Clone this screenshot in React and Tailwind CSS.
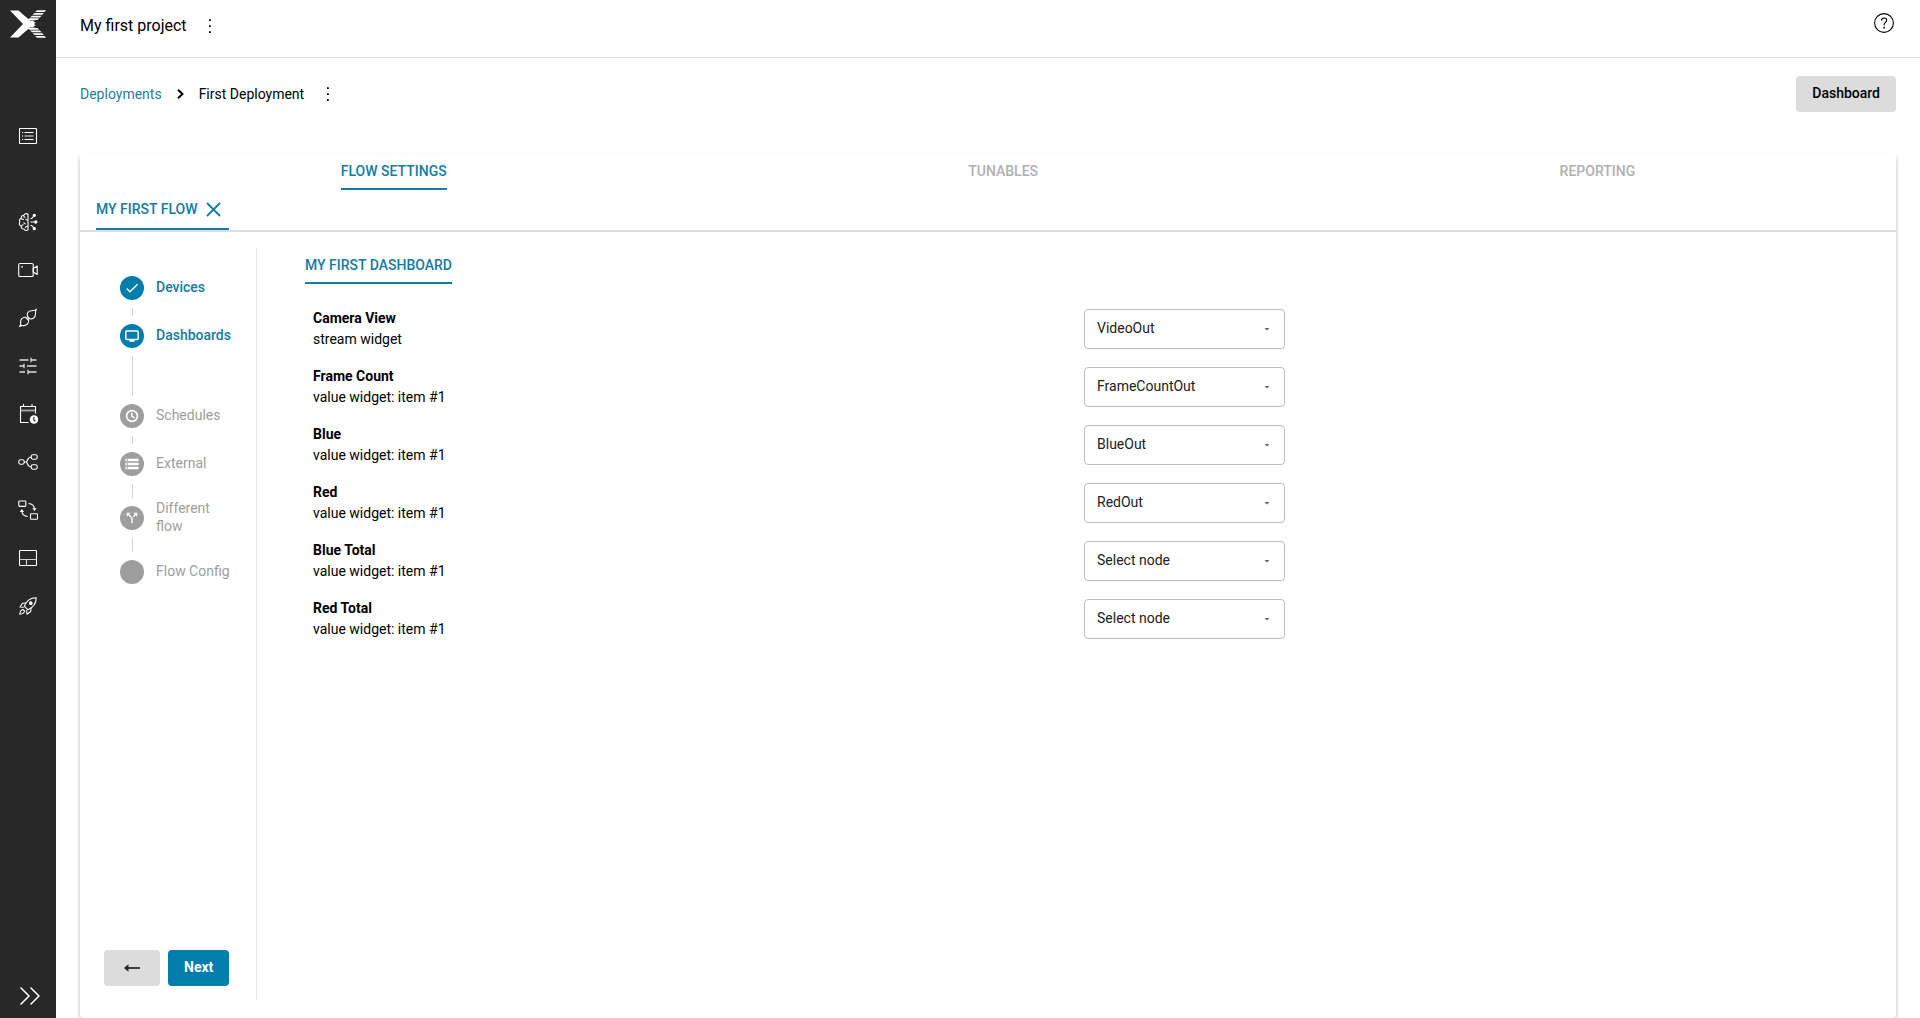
import { Fragment } from 'react'
import { MdCheck, MdCallSplit, MdStorage } from 'react-icons/md'

const NAV_ITEMS = [
  { id: 'devices', label: 'Overview', icon: OverviewIcon },
  { id: 'models', label: 'Models', icon: BrainIcon },
  { id: 'cameras', label: 'Cameras', icon: CameraIcon },
  { id: 'connections', label: 'Connections', icon: PlugIcon },
  { id: 'tuning', label: 'Tuning', icon: SlidersIcon },
  { id: 'schedules', label: 'Schedules', icon: CalendarIcon },
  { id: 'flows', label: 'Flows', icon: BranchIcon },
  { id: 'transforms', label: 'Transforms', icon: SwapIcon },
  { id: 'dashboards', label: 'Dashboards', icon: LayoutIcon },
  { id: 'deployments', label: 'Deployments', icon: RocketIcon },
]

const TABS = ['FLOW SETTINGS', 'TUNABLES', 'REPORTING']

const STEPS = [
  { label: 'Devices', icon: MdCheck, active: true, line: 'h-2' },
  { label: 'Dashboards', icon: ScreenIcon, active: true, line: 'h-10' },
  { label: 'Schedules', icon: ClockIcon, line: 'h-2' },
  { label: 'External', icon: MdStorage, line: 'h-3.5' },
  { label: 'Different flow', icon: MdCallSplit, line: 'h-3.5' },
  { label: 'Flow Config' },
]

const WIDGETS = [
  { name: 'Camera View', type: 'stream widget', node: 'VideoOut' },
  { name: 'Frame Count', type: 'value widget: item #1', node: 'FrameCountOut' },
  { name: 'Blue', type: 'value widget: item #1', node: 'BlueOut' },
  { name: 'Red', type: 'value widget: item #1', node: 'RedOut' },
  { name: 'Blue Total', type: 'value widget: item #1', node: 'Select node' },
  { name: 'Red Total', type: 'value widget: item #1', node: 'Select node' },
]

const NODES = ['Select node', 'VideoOut', 'FrameCountOut', 'BlueOut', 'RedOut']

function LineIcon({ children }) {
  return (
    <svg viewBox="0 0 20 20" className="size-5" fill="none" stroke="currentColor" strokeWidth="1.1" strokeLinejoin="round" aria-hidden="true">
      {children}
    </svg>
  )
}

function OverviewIcon() {
  return (
    <LineIcon>
      <rect x="1.5" y="2.5" width="17" height="15" rx="0.5" />
      <path d="M4 6.5h1.2M6.5 6.5h9M4 13.5h1.2M6.5 13.5h9" />
      <path d="M4 10h1.2M6.5 10h9" strokeWidth="1.6" opacity="0.6" />
    </LineIcon>
  )
}

function BrainIcon() {
  return (
    <LineIcon>
      <path d="M10 1.8v16.4M10 2.2C8.300 1 6.200 1.700 5.800 3.300 4 3.200 3 4.600 3.400 6 1.600 6.700 1 8.500 1.900 10 .8 11.500 1.500 13.700 3.200 14.200 3 16 4.400 17.200 6 17c.7 1.500 2.600 2 4 .9" />
      <path d="M5.800 3.300c-.2 1.200.4 2 1.500 2.200M3.400 6.200c.5 1.200 1.400 1.500 2.400 1.200M5.300 11c1-.2 1.800.2 2.200 1.200M3.300 14.200c.4-1 1.200-1.500 2.300-1.400M10 8.300c-1.300.1-2-.4-2.300-1.400M10 14.300c-1.300-.2-2.300.3-2.800 1.400" />
      <path d="M12.500 10h4M12.500 6.500h1.200l2.300-2.600M12.500 13.500h1.200l2.300 2.600" />
      <circle cx="17.800" cy="10" r="1.100" fill="currentColor" />
      <circle cx="16.300" cy="3.300" r="1.100" fill="currentColor" />
      <circle cx="16.300" cy="16.700" r="1.100" fill="currentColor" />
    </LineIcon>
  )
}

function CameraIcon() {
  return (
    <LineIcon>
      <rect x=".7" y="3.500" width="14.500" height="13" rx="1.300" />
      <path d="M15.200 8.500 19.200 6v8.500l-4-2.500z" />
      <circle cx="4" cy="6.800" r=".9" fill="currentColor" stroke="none" />
    </LineIcon>
  )
}

function PlugIcon() {
  return (
    <LineIcon>
      <path d="M9.500 8.300C8.400 5.300 10.500 2.600 13.700 2.700L17 2.300 18.300 1.200 17.600 3.300 17.400 6.500C17.300 9.600 14.700 11.400 11.900 10.900z" />
      <path d="M7.600 9.300C4.500 8.900 2.300 11.500 2.600 14.200L2.700 16.500 1.500 18.600 3.600 17.600 6 17.600C9 17.500 10.900 15 10.600 12.400z" />
      <path d="M8.500 10.200l1-1M9.800 11.500l1-1" />
    </LineIcon>
  )
}

function SlidersIcon() {
  return (
    <LineIcon>
      <g strokeWidth="1.300" opacity=".85">
        <path d="M1.500 4h9M13 4h5.500M13 1.800v4.400" />
        <path d="M1.500 10h4.500M6 7.800v4.400M9 10h9.500" />
        <path d="M1.500 16h5.500M10 16h8.500M10 13.800v4.400" />
      </g>
    </LineIcon>
  )
}

function CalendarIcon() {
  return (
    <LineIcon>
      <path d="M10.500 18.500H2.500v-16h15v7M5.500 0v2.500M14 0v2.500" />
      <path d="M2.500 6.500h15" strokeWidth="1.800" opacity=".6" />
      <circle cx="16" cy="15.500" r="4.300" fill="currentColor" stroke="none" />
      <path d="M15.800 13v3l1.600 1.200" stroke="#282828" />
    </LineIcon>
  )
}

function BranchIcon() {
  return (
    <LineIcon>
      <rect x=".8" y="7.800" width="5.400" height="4.400" rx="1.600" />
      <rect x="13.200" y="2.800" width="6" height="4.400" rx="1.600" />
      <rect x="13.200" y="12.800" width="6" height="4.400" rx="1.600" />
      <path d="M6.200 10h2.300M13.200 5C10 5 9.800 7.500 8.500 10c1.300 2.500 1.500 5 4.700 5" />
    </LineIcon>
  )
}

function SwapIcon() {
  return (
    <LineIcon>
      <rect x=".8" y="1" width="7" height="5.400" rx=".8" />
      <rect x="12.500" y="13.800" width="7" height="5.400" rx=".8" />
      <path d="M10.500 3.500c3.500.2 5.700 2 5.900 5.500M9.800 16.500c-3.500-.2-5.700-2-5.900-5.500" />
      <path d="m14.300 8.200 2.200 2.900 2.200-2.900zM1.700 12l2.200-2.900L6.100 12z" fill="currentColor" stroke="none" />
    </LineIcon>
  )
}

function LayoutIcon() {
  return (
    <LineIcon>
      <rect x="1.500" y="2.500" width="17" height="15" rx=".8" />
      <path d="M1.500 11.500h17M8.500 11.500v6" opacity=".8" />
    </LineIcon>
  )
}

function RocketIcon() {
  return (
    <LineIcon>
      <path d="M18.200 1.800C12.500 1.700 8.500 4.800 6.300 10.200l3.600 3.600C15.200 11.500 18.300 7.500 18.200 1.800z" />
      <path d="M8 7 4.500 7.300 2 11l3.800.3M13 12l-.3 3.500L9 18.200l-.4-3.900" />
      <path d="M5 13.500c-2 .3-2.900 1.800-3.200 4.700 2.900-.3 4.500-1.200 4.800-3.200z" />
      <circle cx="12.800" cy="7.200" r="1.300" fill="currentColor" />
    </LineIcon>
  )
}

function ScreenIcon({ className }) {
  return (
    <svg viewBox="0 0 16 16" className={className} aria-hidden="true">
      <rect x="1.800" y="3" width="12.400" height="8.600" rx="1" fill="none" stroke="currentColor" strokeWidth="1.500" />
      <path d="M5.500 12h5v1.800h-5z" fill="currentColor" />
    </svg>
  )
}

function ClockIcon({ className }) {
  return (
    <svg viewBox="0 0 16 16" className={className} fill="none" stroke="currentColor" strokeWidth="1.600" aria-hidden="true">
      <circle cx="8" cy="8" r="5.400" />
      <path d="M7.800 4.800V8.300l2.600 1.500" />
    </svg>
  )
}

function Logo() {
  return (
    <svg viewBox="0 0 36 28" className="h-7 w-9" fill="#fff" role="img" aria-label="Home">
      <path d="M0 .5h8.500L20 10.500h5l-2 1.700h3l-2 1.800 2 1.800h-3l2 1.700h-5L8.500 27.500H0L13 14z" />
      <path d="M27 .3h9l-1.500 1.700h-9.300zM24.500 3h9.300l-1.500 1.700h-9.600zM21.900 5.700h9.500l-1.500 1.700h-9.700zM19.300 8.300H29l-1.500 1.600h-9.700z" />
      <path d="M27 27.700h9l-1.500-1.700h-9.300zM24.500 25h9.300l-1.500-1.700h-9.600zM21.900 22.300h9.500l-1.500-1.700h-9.700zM19.300 19.700H29l-1.500-1.600h-9.700z" />
    </svg>
  )
}

function MoreButton({ label }) {
  return (
    <button type="button" aria-label={label} className="flex size-6 items-center justify-center text-black">
      <svg viewBox="0 0 16 16" className="size-4" fill="currentColor" aria-hidden="true">
        <path d="M7 1.200h1.800v1.800H7zM7 7.200h1.800V9H7zM7 13.200h1.800V15H7z" />
      </svg>
    </button>
  )
}

function Sidebar() {
  return (
    <aside className="flex w-14 shrink-0 flex-col items-center bg-[#282828] text-white">
      <a href="#home" className="flex h-12 items-center justify-center">
        <Logo />
      </a>
      <nav className="mt-16 flex flex-col">
        {NAV_ITEMS.map(({ id, label, icon: Icon }, idx) => (
          <a
            key={id}
            href={`#${id}`}
            aria-label={label}
            className={`flex size-12 items-center justify-center ${idx === 0 ? 'mb-[38px]' : ''}`}
          >
            <Icon />
          </a>
        ))}
      </nav>
      <button type="button" aria-label="Expand menu" className="mt-auto flex h-11 w-14 items-center justify-center">
        <svg viewBox="0 0 20 20" className="ml-1 size-5" fill="none" stroke="currentColor" strokeWidth="1.500" aria-hidden="true">
          <path d="m.5 1.500 8.500 8.500-8.500 8.500M10.500 1.500 19 10l-8.500 8.500" />
        </svg>
      </button>
    </aside>
  )
}

function Stepper() {
  return (
    <ol className="flex flex-col pt-7 pl-10">
      {STEPS.map(({ label, icon: Icon, active, line }) => (
        <Fragment key={label}>
          <li className="flex h-6 items-center gap-3">
            <span className={`flex size-6 shrink-0 items-center justify-center rounded-full text-white ${active ? 'bg-[#007dab]' : 'bg-[#9e9e9e]'}`}>
              {Icon && <Icon className="size-4" />}
            </span>
            <span className={`w-20 pb-0.5 text-sm leading-[18px] ${active ? 'font-medium text-[#147ca4]' : 'text-[#9e9e9e]'}`}>
              {label}
            </span>
          </li>
          {line && <li aria-hidden="true" className={`my-2 ml-3 w-px bg-[#d4d4d4] ${line}`} />}
        </Fragment>
      ))}
    </ol>
  )
}

function WidgetRow({ name, type, node, id }) {
  return (
    <div className="grid h-[58px] grid-cols-2 items-center">
      <label htmlFor={id} className="pl-2 text-sm leading-[21px] text-black">
        <span className="block font-bold">{name}</span>
        <span className="block">{type}</span>
      </label>
      <div className="relative w-[201px]">
        <select
          id={id}
          defaultValue={node}
          className="h-10 w-full appearance-none rounded border border-[#bdbdbd] bg-white px-3 pb-0.5 text-sm text-[#212121]"
        >
          {NODES.map((option) => (
            <option key={option}>{option}</option>
          ))}
        </select>
        <svg viewBox="0 0 6 3" className="pointer-events-none absolute top-[19px] right-[15px] h-[3px] w-1.5" fill="#666" aria-hidden="true">
          <path d="M.5 0h5L3 2.500z" />
        </svg>
      </div>
    </div>
  )
}

export default function App() {
  return (
    <div className="flex h-screen overflow-hidden bg-white font-[Roboto,sans-serif] text-black">
      <Sidebar />

      <div className="flex min-w-0 flex-1 flex-col">
        <header className="flex h-[58px] shrink-0 items-start justify-between border-b border-[#dcdcdc] px-6 pt-[13px]">
          <div className="flex items-center gap-[11px]">
            <h1 className="pt-px text-base">My first project</h1>
            <MoreButton label="Project options" />
          </div>
          <button type="button" aria-label="Help" className="mr-0.5">
            <svg viewBox="0 0 20 20" className="size-5" fill="none" stroke="currentColor" strokeWidth="1.100" aria-hidden="true">
              <circle cx="10" cy="10" r="9.400" />
              <path d="M7.500 7.500c0-3.400 5.200-3.300 5.200-.2 0 2.100-2.600 2-2.600 4.500v.7" />
              <circle cx="10.100" cy="14.700" r=".9" fill="currentColor" stroke="none" />
            </svg>
          </button>
        </header>

        <main className="flex min-h-0 flex-1 flex-col px-6 pt-[18px]">
          <div className="flex items-center justify-between">
            <nav aria-label="Breadcrumb" className="flex items-center text-sm">
              <a href="#deployments" className="text-[#1d809f]">Deployments</a>
              <svg viewBox="0 0 10 10" className="mr-3.5 ml-[13px] size-2.5" fill="none" stroke="currentColor" strokeWidth="1.900" aria-hidden="true">
                <path d="m3 .7 4.500 4.300L3 9.300" />
              </svg>
              <span className="mr-3">First Deployment</span>
              <MoreButton label="Deployment options" />
            </nav>
            <button type="button" className="h-9 rounded-sm bg-[#dcdcdc] px-4 pb-0.5 text-sm font-medium">
              Dashboard
            </button>
          </div>

          <section className="mt-[42px] flex min-h-0 flex-1 flex-col rounded bg-white shadow-[0_3px_4px_rgba(0,0,0,0.28)]">
            <div role="tablist" className="flex justify-around">
              {TABS.map((tab, idx) => (
                <button
                  key={tab}
                  type="button"
                  role="tab"
                  aria-selected={idx === 0}
                  className={`h-9 border-b-2 text-sm font-medium ${idx === 0 ? 'border-[#147ca4] text-[#147ca4]' : 'border-transparent text-[#b0b0b0]'}`}
                >
                  {tab}
                </button>
              ))}
            </div>

            <div className="flex border-b-2 border-[#dedede] px-4">
              <div className="flex h-10 items-center gap-2 border-b-2 border-[#147ca4] pr-[7px] text-sm font-medium text-[#147ca4]">
                <button type="button">MY FIRST FLOW</button>
                <button type="button" aria-label="Close flow">
                  <svg viewBox="0 0 16 16" className="size-4" fill="none" stroke="currentColor" strokeWidth="1.800" aria-hidden="true">
                    <path d="m1 2 13 13M14 2 1 15" />
                  </svg>
                </button>
              </div>
            </div>

            <div className="flex min-h-0 flex-1 pt-4 pb-[18px]">
              <div className="flex w-[177px] shrink-0 flex-col border-r border-[#e8e8e8]">
                <Stepper />
                <div className="mt-auto flex gap-2 pb-3.5 pl-6">
                  <button type="button" aria-label="Back" className="flex h-9 w-14 items-center justify-center rounded-sm bg-[#dcdcdc]">
                    <svg viewBox="0 0 16 8" className="h-2 w-4" fill="none" stroke="#222" strokeWidth="1.700" aria-hidden="true">
                      <path d="M16 4H2" />
                      <path d="M4.500 .3 0 4l4.500 3.700z" fill="#222" stroke="none" />
                    </svg>
                  </button>
                  <button type="button" className="h-9 rounded-sm bg-[#007dab] px-4 pb-0.5 text-sm font-bold text-white">
                    Next
                  </button>
                </div>
              </div>

              <div className="min-w-0 flex-1 pr-[33px] pl-12">
                <h2 className="inline-flex h-9 items-center border-b-2 border-[#147ca4] text-sm font-medium text-[#147ca4]">
                  MY FIRST DASHBOARD
                </h2>
                <div className="mt-4">
                  {WIDGETS.map((widget, idx) => (
                    <WidgetRow key={widget.name} id={`node-${idx}`} {...widget} />
                  ))}
                </div>
              </div>
            </div>
          </section>
        </main>
      </div>
    </div>
  )
}
